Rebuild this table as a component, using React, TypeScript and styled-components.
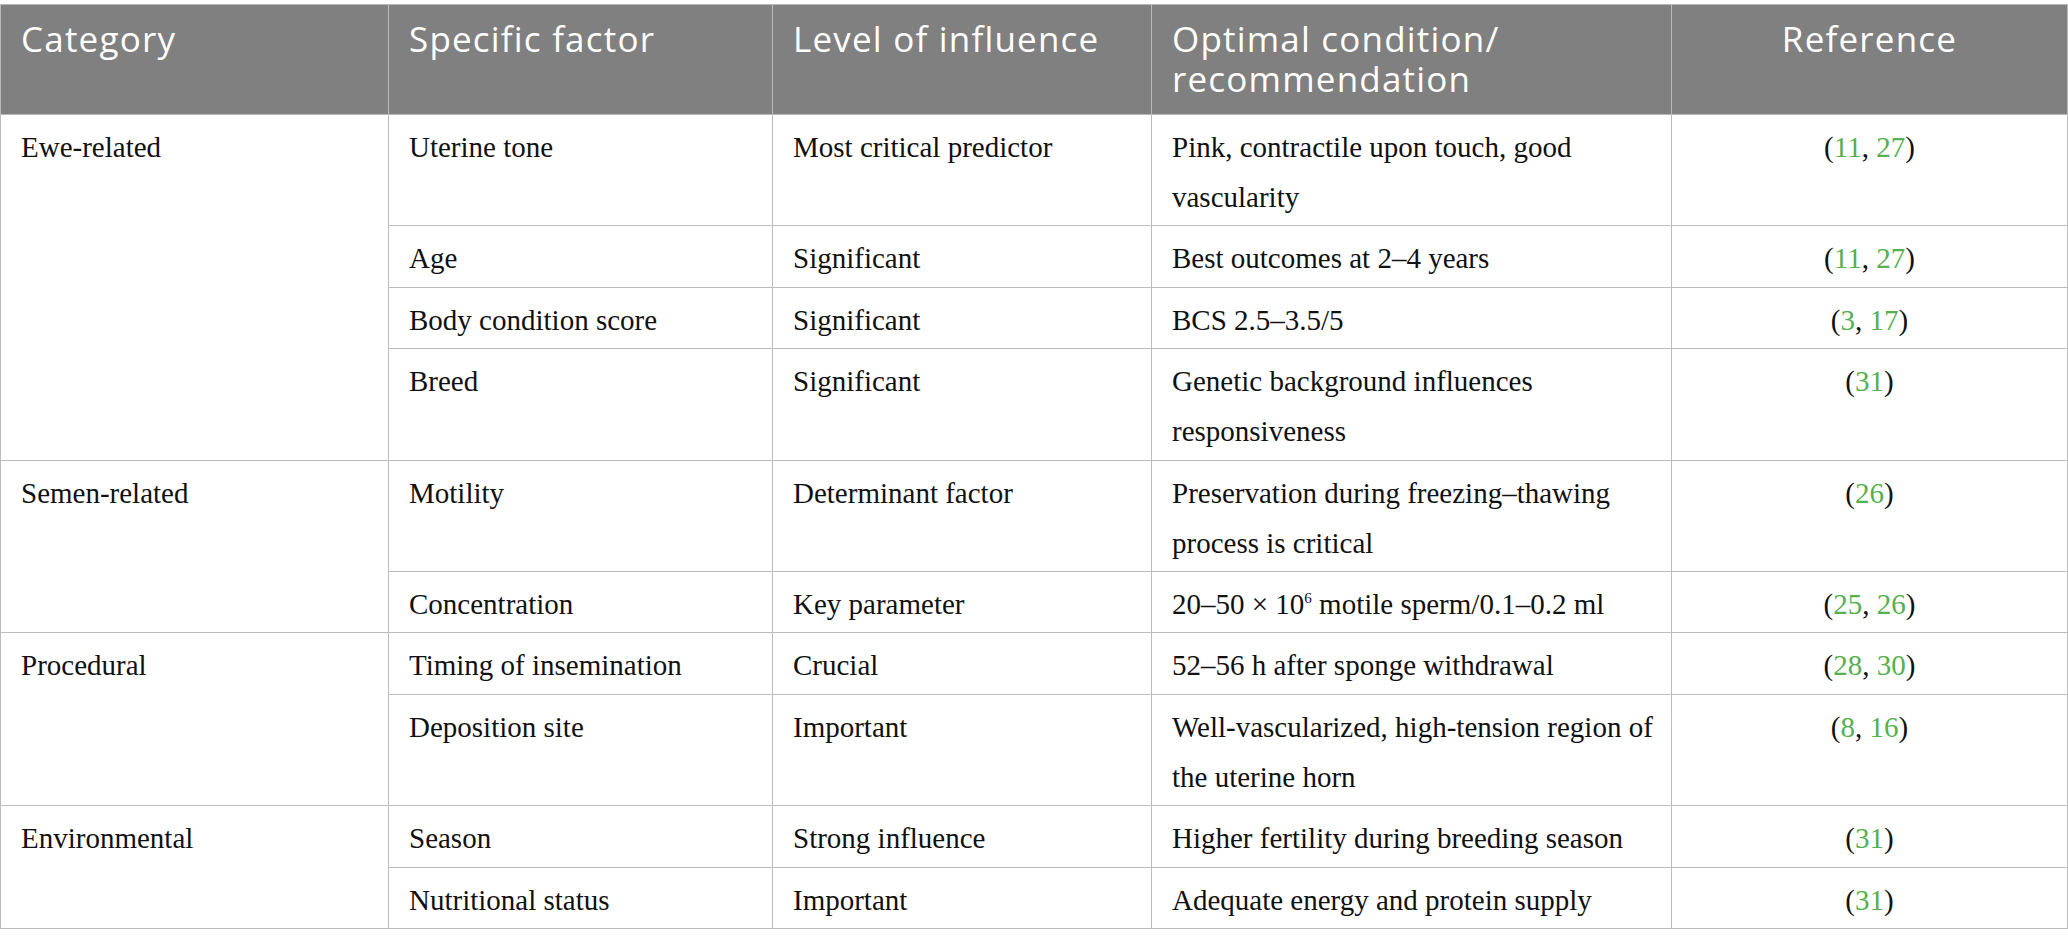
import React from 'react';
import styled, { createGlobalStyle } from 'styled-components';

const GlobalStyle = createGlobalStyle`
  html, body {
    margin: 0;
    padding: 0;
    background: #ffffff;
  }
`;

const Page = styled.div`
  padding-top: 4px;
`;

const Table = styled.table`
  width: 2067px;
  table-layout: fixed;
  border-collapse: collapse;
  font-family: "Liberation Serif", "Times New Roman", serif;
  color: #111111;
`;

const HeadCell = styled.th<{ $center?: boolean }>`
  background: #7f807f;
  color: #ffffff;
  font-family: "Open Sans", "Noto Sans", sans-serif;
  font-weight: 400;
  font-size: 35px;
  letter-spacing: 1.2px;
  line-height: 40px;
  text-align: ${(p) => (p.$center ? 'center' : 'left')};
  vertical-align: top;
  padding: 14px 20px 15px;
  border: 1px solid #b9b9b9;
  height: 80px;
`;

const Cell = styled.td<{ $center?: boolean }>`
  font-size: 29px;
  line-height: 50px;
  text-align: ${(p) => (p.$center ? 'center' : 'left')};
  vertical-align: top;
  padding: 7px ${(p) => (p.$center ? '20px' : '12px')} 3.4px 20px;
  border: 1px solid #bdbdbd;
`;

const RefLink = styled.span`
  color: #55b050;
`;

const Sup = styled.sup`
  font-size: 15px;
  line-height: 0;
  vertical-align: 11px;
`;

type Row = {
  factor: string;
  level: string;
  condition: React.ReactNode;
  refs: number[];
};

type Group = {
  category: string;
  rows: Row[];
};

const groups: Group[] = [
  {
    category: 'Ewe-related',
    rows: [
      {
        factor: 'Uterine tone',
        level: 'Most critical predictor',
        condition: 'Pink, contractile upon touch, good vascularity',
        refs: [11, 27],
      },
      { factor: 'Age', level: 'Significant', condition: 'Best outcomes at 2–4 years', refs: [11, 27] },
      { factor: 'Body condition score', level: 'Significant', condition: 'BCS 2.5–3.5/5', refs: [3, 17] },
      {
        factor: 'Breed',
        level: 'Significant',
        condition: 'Genetic background influences responsiveness',
        refs: [31],
      },
    ],
  },
  {
    category: 'Semen-related',
    rows: [
      {
        factor: 'Motility',
        level: 'Determinant factor',
        condition: 'Preservation during freezing–thawing process is critical',
        refs: [26],
      },
      {
        factor: 'Concentration',
        level: 'Key parameter',
        condition: (
          <>
            20–50 × 10<Sup>6</Sup> motile sperm/0.1–0.2 ml
          </>
        ),
        refs: [25, 26],
      },
    ],
  },
  {
    category: 'Procedural',
    rows: [
      {
        factor: 'Timing of insemination',
        level: 'Crucial',
        condition: '52–56 h after sponge withdrawal',
        refs: [28, 30],
      },
      {
        factor: 'Deposition site',
        level: 'Important',
        condition: 'Well-vascularized, high-tension region of the uterine horn',
        refs: [8, 16],
      },
    ],
  },
  {
    category: 'Environmental',
    rows: [
      {
        factor: 'Season',
        level: 'Strong influence',
        condition: 'Higher fertility during breeding season',
        refs: [31],
      },
      {
        factor: 'Nutritional status',
        level: 'Important',
        condition: 'Adequate energy and protein supply',
        refs: [31],
      },
    ],
  },
];

const Refs = ({ refs }: { refs: number[] }) => (
  <>
    (
    {refs.map((r, i) => (
      <React.Fragment key={r}>
        {i > 0 && ', '}
        <RefLink>{r}</RefLink>
      </React.Fragment>
    ))}
    )
  </>
);

const App = () => {
  return (
    <Page>
      <GlobalStyle />
      <Table>
        <colgroup>
          <col style={{ width: 388 }} />
          <col style={{ width: 384 }} />
          <col style={{ width: 379 }} />
          <col style={{ width: 520 }} />
          <col style={{ width: 396 }} />
        </colgroup>
        <thead>
          <tr>
            <HeadCell>Category</HeadCell>
            <HeadCell>Specific factor</HeadCell>
            <HeadCell>Level of influence</HeadCell>
            <HeadCell>
              Optimal condition/
              <br />
              recommendation
            </HeadCell>
            <HeadCell $center>Reference</HeadCell>
          </tr>
        </thead>
        <tbody>
          {groups.map((group) =>
            group.rows.map((row, i) => (
              <tr key={group.category + row.factor}>
                {i === 0 && <Cell rowSpan={group.rows.length}>{group.category}</Cell>}
                <Cell>{row.factor}</Cell>
                <Cell>{row.level}</Cell>
                <Cell>{row.condition}</Cell>
                <Cell $center>
                  <Refs refs={row.refs} />
                </Cell>
              </tr>
            )),
          )}
        </tbody>
      </Table>
    </Page>
  );
};

export default App;
